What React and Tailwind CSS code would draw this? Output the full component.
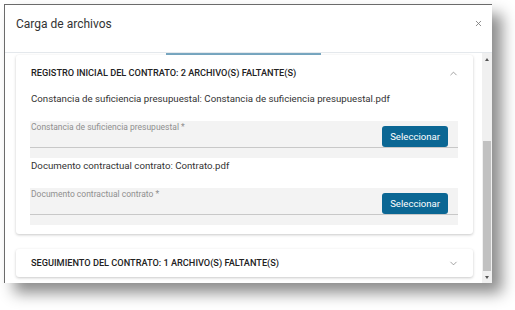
import { ChevronUp, ChevronDown, X } from 'lucide-react';

function FileField({ label }) {
  return (
    <div className="ml-[14px] mr-[15px] bg-[#f3f3f3] h-[37px] flex flex-col">
      <div className="flex h-[27px] border-b border-[#c8c8c8] pl-[1px] pr-[10px]">
        <span className="text-[8.5px] leading-[11px] text-[#8f8f8f] pt-[1px] flex-1">{label}</span>
        <button className="self-end h-[21px] px-[8px] rounded-[3px] bg-[#0b6794] text-white text-[9.6px] leading-none">
          Seleccionar
        </button>
      </div>
    </div>
  );
}

function Section({ title, open, children }) {
  return (
    <div className="bg-white rounded-[3px] shadow-[0_1px_3px_rgba(0,0,0,0.22)]">
      <div className={`flex items-center ${open ? 'h-[36px]' : 'h-[28px]'} pl-[15px] pr-[14px]`}>
        <span className="flex-1 text-[9.2px] font-medium text-[#222]">{title}</span>
        {open ? (
          <ChevronUp size={11} strokeWidth={1.5} className="text-[#777]" />
        ) : (
          <ChevronDown size={11} strokeWidth={1.5} className="text-[#777]" />
        )}
      </div>
      {children}
    </div>
  );
}

export default function App() {
  return (
    <div
      className="w-[515px] h-[310px] bg-white overflow-hidden pt-[4px] pl-[4px]"
      style={{ fontFamily: 'Roboto, "Liberation Sans", sans-serif' }}
    >
      <div className="w-[488px] h-[279px] bg-white border-l-[1.5px] border-t border-[#6b6b6b] flex flex-col shadow-[10px_10px_14px_rgba(0,0,0,0.45)]">
        <div className="h-[48px] flex items-start justify-between pt-[11px] pl-[11px] pr-[9px] border-b border-[#e4e8ec] shrink-0">
          <span className="text-[12px] leading-[16px] text-[#333]">Carga de archivos</span>
          <X size={9} strokeWidth={2.2} className="text-[#777] mt-[3px]" />
        </div>
        <div className="flex flex-1 min-h-0">
          <div className="flex-1 overflow-hidden pl-[11px] pr-[9px]">
            <div className="ml-[150px] w-[155px] h-[2px] bg-[#79a9c3]" />
            <Section title="REGISTRO INICIAL DEL CONTRATO: 2 ARCHIVO(S) FALTANTE(S)" open>
              <div className="pb-[9px]">
                <p className="h-[30px] px-[15px] pt-[2px] text-[9.7px] leading-[12px] text-[#333]">
                  Constancia de suficiencia presupuestal: Constancia de suficiencia presupuestal.pdf
                </p>
                <FileField label="Constancia de suficiencia presupuestal *" />
                <p className="h-[30px] px-[15px] pt-[2px] text-[9.7px] leading-[12px] text-[#333]">
                  Documento contractual contrato: Contrato.pdf
                </p>
                <FileField label="Documento contractual contrato *" />
              </div>
            </Section>
            <div className="h-[15px]" />
            <Section title="SEGUIMIENTO DEL CONTRATO: 1 ARCHIVO(S) FALTANTE(S)" />
          </div>
          <div className="w-[10px] bg-[#f0f0f0] flex flex-col items-center">
            <div className="h-[12px] flex items-center justify-center">
              <div className="w-0 h-0 border-l-[2.5px] border-r-[2.5px] border-b-[3px] border-l-transparent border-r-transparent border-b-[#555]" />
            </div>
            <div className="h-[76px]" />
            <div className="w-[8px] flex-1 bg-[#c1c1c1]" />
            <div className="h-[12px] flex items-center justify-center">
              <div className="w-0 h-0 border-l-[2.5px] border-r-[2.5px] border-t-[3px] border-l-transparent border-r-transparent border-t-[#555]" />
            </div>
          </div>
        </div>
      </div>
    </div>
  );
}
